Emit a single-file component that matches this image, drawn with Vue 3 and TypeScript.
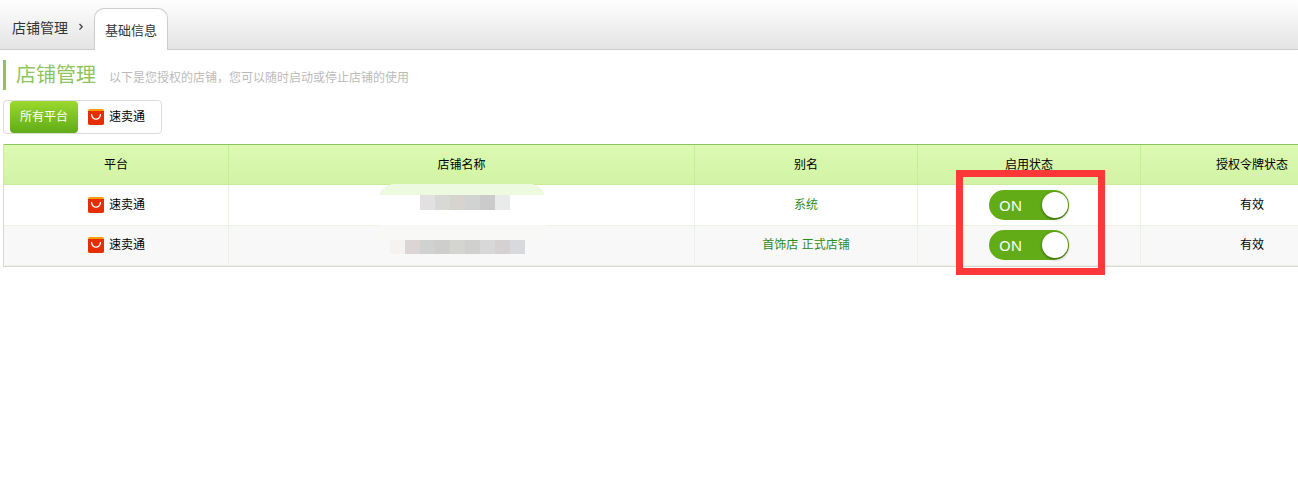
<script setup lang="ts">
import { ref } from 'vue'

interface Shop {
  id: number
  platform: string
  alias: string
  enabled: boolean
  token: string
  blocks: string[]
}

const shops = ref<Shop[]>([
  {
    id: 1,
    platform: '速卖通',
    alias: '系统',
    enabled: true,
    token: '有效',
    blocks: ['#e2e0e1', '#d8d9d5', '#d7d3cf', '#d1d3d2', '#cbcbcb', '#e9ebea'],
  },
  {
    id: 2,
    platform: '速卖通',
    alias: '首饰店 正式店铺',
    enabled: true,
    token: '有效',
    blocks: ['#f4f3f2', '#dbd5d6', '#cfd2d0', '#cecfcd', '#d4d5d0', '#d0d1cf', '#d8d8d8', '#d5d0d2', '#d8d9dd'],
  },
])
</script>

<template>
  <div class="page">
    <header class="topbar">
      <span class="crumb">店铺管理</span>
      <svg class="chevron" width="6" height="8" viewBox="0 0 6 8" aria-hidden="true">
        <path d="M1.5 1 L4.2 3.8 L1.5 6.6" fill="none" stroke="#444" stroke-width="1.3" />
      </svg>
      <a class="tab" href="#">基础信息</a>
    </header>

    <main>
      <div class="heading">
        <h1>店铺管理</h1>
        <p>以下是您授权的店铺，您可以随时启动或停止店铺的使用</p>
      </div>

      <nav class="filter">
        <button type="button" class="option active">所有平台</button>
        <button type="button" class="option">
          <svg class="logo" width="16" height="16" viewBox="0 0 16 16" aria-hidden="true">
            <rect width="16" height="16" rx="2" fill="#ff9a00" />
            <path d="M0 2 H16 V14 Q16 16 14 16 H2 Q0 16 0 14 Z" fill="#e62e04" />
            <path d="M3.6 5.6 Q4.2 10.2 8 10.2 Q11.8 10.2 12.4 5.6" fill="none" stroke="#fff" stroke-width="1.3" stroke-linecap="round" />
          </svg>
          <span>速卖通</span>
        </button>
      </nav>

      <div class="grid">
        <table>
          <colgroup>
            <col class="c-platform" />
            <col class="c-name" />
            <col class="c-other" />
            <col class="c-other" />
            <col class="c-other" />
          </colgroup>
          <thead>
            <tr>
              <th>平台</th>
              <th>店铺名称</th>
              <th>别名</th>
              <th>启用状态<span class="highlight"></span></th>
              <th>授权令牌状态</th>
            </tr>
          </thead>
          <tbody>
            <tr v-for="(shop, row) in shops" :key="shop.id">
              <td>
                <span class="platform">
                  <svg class="logo" width="16" height="16" viewBox="0 0 16 16" aria-hidden="true">
                    <rect width="16" height="16" rx="2" fill="#ff9a00" />
                    <path d="M0 2 H16 V14 Q16 16 14 16 H2 Q0 16 0 14 Z" fill="#e62e04" />
                    <path d="M3.6 5.6 Q4.2 10.2 8 10.2 Q11.8 10.2 12.4 5.6" fill="none" stroke="#fff" stroke-width="1.3" stroke-linecap="round" />
                  </svg>
                  <span>{{ shop.platform }}</span>
                </span>
              </td>
              <td>
                <svg v-if="row === 0" class="mask" width="170" height="26" viewBox="0 0 170 26" aria-hidden="true">
                  <path d="M2 11 Q6 2 15 0 H155 Q164 2 168 11 Z" fill="#eefae0" />
                  <rect v-for="(c, i) in shop.blocks" :key="i" :x="43 + i * 15" y="11" width="15" height="15" :fill="c" />
                </svg>
                <svg v-else class="mask" width="170" height="29" viewBox="0 0 170 29" aria-hidden="true">
                  <rect x="2" width="168" height="15" fill="#f8f8f6" />
                  <rect v-for="(c, i) in shop.blocks" :key="i" :x="13 + i * 15" y="15" width="15" height="14" :fill="c" />
                </svg>
              </td>
              <td><a class="alias" href="#">{{ shop.alias }}</a></td>
              <td>
                <label class="switch">
                  <input v-model="shop.enabled" type="checkbox" />
                  <span class="state">{{ shop.enabled ? 'ON' : 'OFF' }}</span>
                  <span class="knob"></span>
                </label>
              </td>
              <td>{{ shop.token }}</td>
            </tr>
          </tbody>
        </table>
      </div>
    </main>
  </div>
</template>

<style>
body {
  margin: 0;
  background: #fff;
}
</style>

<style scoped>
.page {
  overflow: hidden;
  min-height: 100vh;
  font: 12px/18px "Liberation Sans", "Noto Sans CJK SC", sans-serif;
  color: #000;
}

.page * {
  box-sizing: border-box;
}

.topbar {
  display: flex;
  align-items: center;
  height: 50px;
  padding-left: 12px;
  border-bottom: 1px solid #ccc;
  background: linear-gradient(#fefefe, #e4e4e4);
  color: #333;
}

.crumb {
  padding-top: 6px;
  font-size: 14px;
  line-height: 20px;
}

.chevron {
  margin: 4px 10px 0;
}

.tab {
  align-self: flex-end;
  height: 42px;
  margin-bottom: -1px;
  padding: 0 10px;
  border: 1px solid #ccc;
  border-bottom: 0;
  border-radius: 10px 10px 0 0;
  background: #fff;
  color: #333;
  font-size: 13px;
  line-height: 44px;
  text-decoration: none;
}

main {
  padding: 10px 0 0 3px;
}

.heading {
  display: flex;
  align-items: center;
  height: 30px;
  border-left: 3px solid #8fc45c;
}

h1 {
  margin: 0 13px 0 10px;
  color: #8fc45c;
  font-size: 20px;
  font-weight: 400;
  line-height: 30px;
}

.heading p {
  margin: 6px 0 0;
  color: #bbb;
}

.filter {
  display: flex;
  width: fit-content;
  margin: 10px 0;
  padding: 0 6px;
  border: 1px solid #dcdcdc;
  border-radius: 4px;
}

.option {
  display: flex;
  align-items: center;
  gap: 5px;
  height: 32px;
  padding: 0 10px;
  border: 0;
  border-radius: 4px;
  background: none;
  color: #000;
  font: inherit;
}

.option.active {
  background: linear-gradient(#9bd92e, #5fab17);
  color: #fff;
}

.logo {
  display: block;
}

.grid {
  border-left: 1px solid #d8d8d8;
}

table {
  width: calc(100% + 66px);
  border-collapse: separate;
  border-spacing: 0;
  border-top: 1px solid #8ac45c;
  border-bottom: 1px solid #d8d8d8;
  table-layout: fixed;
  text-align: center;
}

.c-platform {
  width: 225px;
}

.c-other {
  width: 223px;
}

th,
td {
  position: relative;
  padding: 0;
  border-right: 1px solid #ebf2e0;
  border-bottom: 1px solid #ebf2e0;
  font-weight: 400;
}

th {
  height: 40px;
  border-color: #c8ec98;
  background: linear-gradient(#dcfab2, #d2f3a4);
}

td {
  height: 41px;
}

tbody tr:last-child td {
  height: 40px;
  padding-bottom: 1px;
  background: #f8f8f8;
}

.platform {
  display: flex;
  align-items: center;
  justify-content: center;
  gap: 5px;
  padding-left: 1px;
}

.mask {
  position: absolute;
  top: -1px;
  left: calc(50% - 85px);
}

.alias {
  color: #2f8a1c;
  text-decoration: none;
}

.switch {
  display: flex;
  align-items: center;
  justify-content: space-between;
  width: 80px;
  height: 30px;
  margin: 0 auto;
  padding: 0 1px 0 10px;
  border-radius: 15px;
  background: #62ad17;
  color: #fff;
  font-family: "Noto Sans", sans-serif;
  font-size: 15px;
}

.switch input {
  position: absolute;
  opacity: 0;
}

.knob {
  width: 26px;
  height: 26px;
  border-radius: 50%;
  background: #fff;
  box-shadow: 0 1px 3px rgba(0, 0, 0, 0.5);
}

.highlight {
  position: absolute;
  z-index: 2;
  top: 25px;
  left: calc(50% - 73px);
  width: 149px;
  height: 105px;
  border: 7px solid #fc3838;
  pointer-events: none;
}
</style>
